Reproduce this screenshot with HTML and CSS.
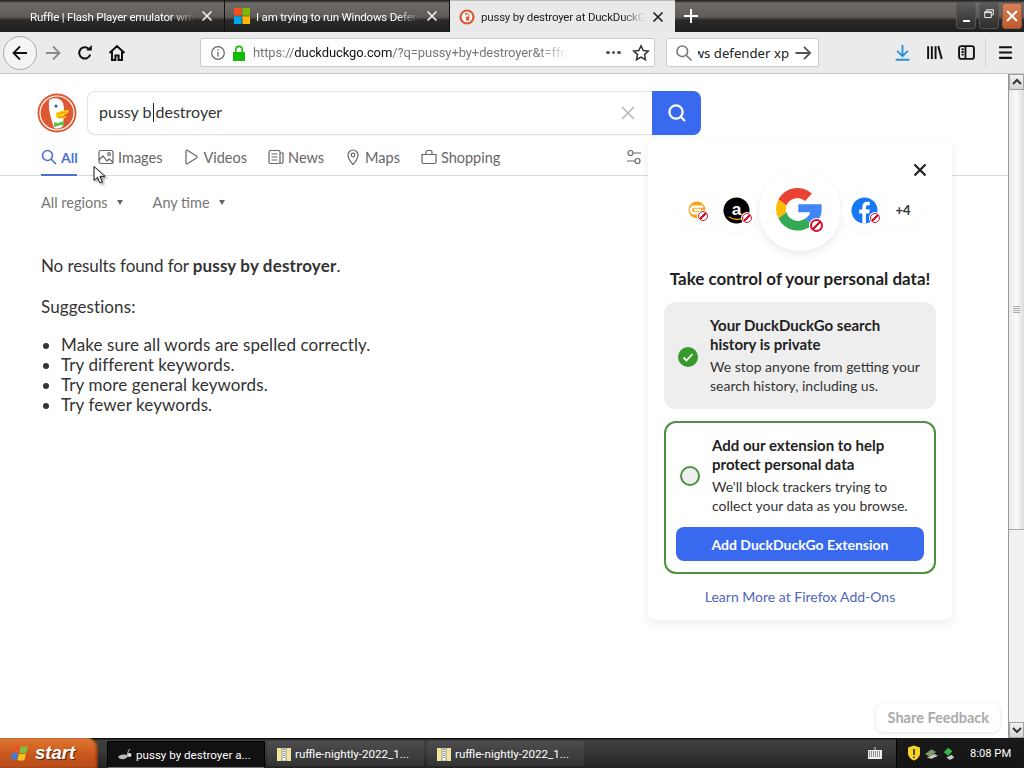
FILE: index.html
```html
<!DOCTYPE html>
<html lang="en">
<head>
<meta charset="utf-8">
<title>pussy by destroyer at DuckDuckGo</title>
<link rel="stylesheet" href="styles.css">
</head>
<body>
<div class="window">
  <header class="tabbar">
    <div class="tab dark first"><span class="tab-title">Ruffle | Flash Player emulator writ</span><svg class="tab-x" viewBox="0 0 12 12"><path d="M1.5 1.5l9 9M10.5 1.5l-9 9"/></svg></div>
    <div class="tab dark second">
      <svg class="fav" viewBox="0 0 16 16"><rect width="7.6" height="7.6" fill="#f25022"/><rect x="8.4" width="7.6" height="7.6" fill="#7fba00"/><rect y="8.4" width="7.6" height="7.6" fill="#00a4ef"/><rect x="8.4" y="8.4" width="7.6" height="7.6" fill="#ffb900"/></svg>
      <span class="tab-title">I am trying to run Windows Defen</span><svg class="tab-x" viewBox="0 0 12 12"><path d="M1.5 1.5l9 9M10.5 1.5l-9 9"/></svg></div>
    <div class="tab tab-active">
      <svg class="fav" viewBox="0 0 16 16"><circle cx="8" cy="8" r="7.6" fill="#de5833"/><circle cx="8" cy="8" r="5.4" fill="#fff"/><path d="M6 4.2c2.6-1 4.6.5 4.4 3l-.2 4.6H7.4z" fill="#de5833"/><circle cx="8" cy="6.6" r="1.4" fill="#fff"/></svg>
      <span class="tab-title">pussy by destroyer at DuckDuckG</span><svg class="tab-x dark-x" viewBox="0 0 12 12"><path d="M1.5 1.5l9 9M10.5 1.5l-9 9"/></svg></div>
    <svg class="newtab" viewBox="0 0 14 14"><path d="M7 0v14M0 7h14"/></svg>
    <div class="caption">
      <div class="cap-btn"><span class="min-glyph"></span></div>
      <div class="cap-btn"><svg viewBox="0 0 11 11" class="cap-svg"><path d="M3 2.5V.8h7.2v5.6H8M.8 3h7.2v6.4H.8zM.8 4h7.2"/></svg></div>
      <div class="cap-btn close"><svg viewBox="0 0 12 12" class="cap-svg close-svg"><path d="M1 1l10 10M11 1L1 11"/></svg></div>
    </div>
  </header>

  <nav class="toolbar">
    <div class="back"><svg viewBox="0 0 18 18" class="ic"><path d="M16 9H2.5M9 2.5L2.5 9 9 15.5"/></svg></div>
    <svg viewBox="0 0 18 18" class="ic fwd"><path d="M2 9h13.5M9 2.5L15.5 9 9 15.5"/></svg>
    <svg viewBox="0 0 18 18" class="ic reload"><path d="M14.2 10.5A5.6 5.6 0 1 1 12.8 5"/><path class="solid" d="M10.2 6.6h5.6V1z"/></svg>
    <svg viewBox="0 0 18 18" class="ic home"><path d="M1.5 9L9 2l7.5 7M4 7.5V16h3.4v-4.5h3.2V16H14V7.5"/></svg>
    <div class="urlbar">
      <svg viewBox="0 0 16 16" class="info"><circle cx="8" cy="8" r="6.3"/><path d="M8 7v4.6M8 4.2v1.6"/></svg>
      <svg viewBox="0 0 14 16" class="lock"><path class="lock-body" d="M1 7h12v9H1z"/><path class="lock-loop" d="M3.8 7V4.6a3.2 3.2 0 0 1 6.4 0V7"/></svg>
      <span class="url"><span class="url-dim">https://</span>duckduckgo.com<span class="url-dim">/?q=pussy+by+destroyer&amp;t=ffn</span></span>
      <span class="dots"><i></i><i></i><i></i></span>
      <svg viewBox="0 0 18 18" class="star"><path d="M9 1.8l2.2 4.7 5.1.6-3.8 3.5 1 5.1L9 13.2l-4.5 2.5 1-5.1L1.7 7.100l5.100-.6z"/></svg>
    </div>
    <div class="searchbar">
      <svg viewBox="0 0 18 18" class="mag"><circle cx="7.300" cy="7.300" r="5.300"/><path d="M11.200 11.200L16.500 16.500"/></svg>
      <span class="search-text"><span class="search-inner">windows defender xp</span></span>
      <svg viewBox="0 0 18 18" class="ic go"><path d="M1.500 9H16M10 2.800L16.200 9 10 15.200"/></svg>
    </div>
    <div class="tools">
      <svg viewBox="0 0 16 16" class="tool dl"><path d="M8 1v10M3 6.500L8 11.500l5-5M1.500 14.800h13"/></svg>
      <svg viewBox="0 0 16 16" class="tool lib"><path d="M2 2v12M5.500 2v12M9 2v12M11.500 2l3.300 12"/></svg>
      <svg viewBox="0 0 16 16" class="tool side"><rect x="1" y="2" width="14" height="12" rx="2"/><path d="M7 2v12M3.300 5h2M3.300 7.500h2M3.300 10h2"/></svg>
      <span class="tool-sep"></span>
      <svg viewBox="0 0 16 16" class="tool burger"><path d="M2 3h12M2 8h12M2 13h12"/></svg>
    </div>
  </nav>

  <div class="viewport">
    <main class="page">
      <div class="search-row">
        <svg viewBox="0 0 40 40" class="logo">
          <circle cx="20" cy="20" r="19.500" fill="#de5833"/>
          <circle cx="20" cy="20" r="17" fill="none" stroke="#fff" stroke-width="1.200"/>
          <path d="M12 7c5-3 12-2 14 3 1 3 1 7 1 9l-1 14c-3 3-7 3-9 2-2-8-6-16-5-28z" fill="#fff"/>
          <circle cx="19" cy="13" r="1.500" fill="#2d4f8e"/>
          <path d="M19 20c3-2 9-3 12-3 1 1 1 2 0 3l-4 2 3 2c-3 2-8 2-11 0z" fill="#fdd20a"/>
          <path d="M21 21c3-1 6-2 9-2M21 24c3 .5 6 0 8-1" stroke="#f58a1f" stroke-width="1.200" fill="none"/>
          <path d="M17 29l4 1 3-1 3-1v5l-3-1-3 1-4 1z" fill="#67bd45"/>
        </svg>
        <div class="searchbox">
          <div class="query">pussy b<span class="caret"></span>destroyer</div>
          <svg viewBox="0 0 14 14" class="clear"><path d="M1 1l12 12M13 1L1 13"/></svg>
          <div class="search-btn"><svg viewBox="0 0 20 20" class="search-ic"><circle cx="9" cy="9" r="6.600"/><path d="M13.800 13.800L18 18"/></svg></div>
        </div>
      </div>

      <div class="nav-tabs">
        <div class="nt nt-active"><svg viewBox="0 0 16 16" class="nt-ic"><circle cx="6.500" cy="6.500" r="5"/><path d="M10.200 10.200L15 15"/></svg>All</div>
        <div class="nt"><svg viewBox="0 0 16 16" class="nt-ic"><rect x="1" y="1.500" width="14" height="13" rx="2"/><circle cx="11" cy="5" r="1.300"/><path d="M1 11l4-4 4 5 2-2 4 3"/></svg>Images</div>
        <div class="nt"><svg viewBox="0 0 16 16" class="nt-ic"><path d="M3 2c0-.8.600-1 1.300-.7L13.500 7c.8.500.8 1.500 0 2l-9.200 5.700C3.600 15 3 14.800 3 14z"/></svg>Videos</div>
        <div class="nt"><svg viewBox="0 0 16 16" class="nt-ic"><rect x="1" y="1.500" width="11" height="13" rx="1.500"/><path d="M12 4h3v9a1.500 1.500 0 0 1-3 0M3.500 5h6M3.500 8h6M3.500 11h6"/></svg>News</div>
        <div class="nt"><svg viewBox="0 0 16 16" class="nt-ic"><path d="M8 15.500S3 10 3 6a5 5 0 0 1 10 0c0 4-5 9.500-5 9.500z"/><circle cx="8" cy="6" r="1.800"/></svg>Maps</div>
        <div class="nt"><svg viewBox="0 0 16 16" class="nt-ic"><path d="M1 5.500h14v7.500a1.500 1.500 0 0 1-1.500 1.500h-11A1.500 1.500 0 0 1 1 13zM5 5.500V3a1.500 1.500 0 0 1 1.500-1.500h3A1.500 1.500 0 0 1 11 3v2.500"/></svg>Shopping</div>
        <div class="nt settings"><svg viewBox="0 0 16 16" class="nt-ic"><circle cx="4.500" cy="4" r="2.500"/><circle cx="11.500" cy="12" r="2.500"/><path d="M7 4h8M1 12h8"/></svg>Settings</div>
      </div>

      <div class="filters">
        <span class="filter">All regions<i class="tri"></i></span>
        <span class="filter">Any time<i class="tri"></i></span>
      </div>

      <div class="results">
        <p class="no-res">No results found for <b>pussy by destroyer</b>.</p>
        <p class="sugg">Suggestions:</p>
        <ul class="sugg-list">
          <li>Make sure all words are spelled correctly.</li>
          <li>Try different keywords.</li>
          <li>Try more general keywords.</li>
          <li>Try fewer keywords.</li>
        </ul>
      </div>

      <aside class="promo">
        <svg viewBox="0 0 14 14" class="promo-x"><path d="M1.500 1.500l11 11M12.500 1.500l-11 11"/></svg>
        <div class="brands">
          <div class="brand b-s"><svg viewBox="0 0 34 34" class="brand-svg s20"><circle cx="17" cy="17" r="11" fill="#f5a51b"/><path d="M25 12.500H13.500a4.500 4.500 0 0 0 0 9H22M13 17h9" stroke="#fff" stroke-width="3" fill="none"/></svg><span class="block bs"></span></div>
          <div class="brand b-m"><svg viewBox="0 0 28 28" class="brand-svg s27"><circle cx="14" cy="14" r="13.500" fill="#000"/><text x="14" y="19" class="amz">a</text><path d="M6 20.500c5 3.500 11 3.500 16 .5" stroke="#f90" stroke-width="1.500" fill="none"/></svg><span class="block bs"></span></div>
          <div class="brand b-l"><svg viewBox="2 1 44 44" class="brand-svg s44">
            <path d="M34.500 8.500A19 19 0 0 0 5 13.500l7 5.500a10.500 10.500 0 0 1 16.500-4z" fill="#ea4335"/>
            <path d="M5 13.500a19 19 0 0 0 0 17l7-5.500a10.500 10.500 0 0 1 0-6z" fill="#fbbc05"/>
            <path d="M5 30.500A19 19 0 0 0 35 36l-6.500-5.500A10.500 10.500 0 0 1 12 25z" fill="#34a853"/>
            <path d="M22.500 18H43v5c0 6-3 10-8 13l-6.500-5.500c2.500-1.500 4-3.200 4.500-5.500H22.500z" fill="#4285f4"/></svg><span class="block bl"></span></div>
          <div class="brand b-m"><svg viewBox="0 0 28 28" class="brand-svg s27"><circle cx="14" cy="14" r="13.500" fill="#1877f2"/><path d="M15.500 27.500V17h3.300l.6-4h-3.900v-2.400c0-1.200.5-2 2.100-2h1.900V5.200C18.900 5 17.800 5 16.800 5c-3 0-5 1.800-5 5.100V13H8.500v4h3.300v10.500z" fill="#fff"/></svg><span class="block bs"></span></div>
          <div class="brand b-s more">+4</div>
        </div>
        <h2 class="promo-title">Take control of your personal data!</h2>
        <section class="card done">
          <span class="check"><svg viewBox="0 0 20 20" class="check-svg"><path d="M5.500 10.500l3 3 6-6.500"/></svg></span>
          <div class="card-copy">
            <h3>Your DuckDuckGo search history is private</h3>
            <p>We stop anyone from getting your search history, including us.</p>
          </div>
        </section>
        <section class="card todo">
          <div class="todo-row">
            <span class="radio"></span>
            <div class="card-copy">
              <h3>Add our extension to help protect personal data</h3>
              <p>We'll block trackers trying to collect your data as you browse.</p>
            </div>
          </div>
          <div class="add-btn">Add DuckDuckGo Extension</div>
        </section>
        <div class="learn">Learn More at Firefox Add-Ons</div>
      </aside>

      <div class="feedback">Share Feedback</div>
      <svg viewBox="0 0 12 19" class="cursor"><path d="M1 1v14l3.500-3.300 2.300 5.600 2.500-1-2.400-5.500H12z"/></svg>
    </main>
    <div class="scrollbar">
      <div class="sb-btn"><svg viewBox="0 0 10 8" class="sb-arrow"><path d="M1 6l4-4 4 4"/></svg></div>
      <div class="sb-track"><div class="sb-thumb"><span class="grip"></span></div></div>
      <div class="sb-btn"><svg viewBox="0 0 10 8" class="sb-arrow"><path d="M1 2l4 4 4-4"/></svg></div>
    </div>
  </div>

  <footer class="taskbar">
    <div class="start">
      <svg viewBox="0 0 20 20" class="flag"><path d="M3 3c2-1 4-1 6 0L7.500 9.500c-2-1-4-1-6 0z" fill="#e8542a"/><path d="M10 3c2 1 4 1 7 0l-1.500 6.500c-2 1-5 1-7 0z" fill="#7cc242"/><path d="M1 10.500c2-1 4-1 6 0L5.500 17c-2-1-4-1-6 0z" fill="#3f7fe0"/><path d="M8 10.500c2 1 5 1 7 0L13.500 17c-2 1-5 1-7 0z" fill="#f5c31c"/></svg>
      <span class="start-text">start</span>
    </div>
    <div class="task pressed"><svg viewBox="0 0 16 16" class="task-ic"><path d="M1 10c3-3 7-3 10-1-1 3-7 5-10 1z" fill="#bbb"/><path d="M10 9c1-3 1-6 3-7" stroke="#ccc" fill="none"/><circle cx="12.500" cy="8" r="2" fill="#ddd"/></svg><span>pussy by destroyer a...</span></div>
    <div class="task"><svg viewBox="0 0 16 16" class="task-ic"><path d="M1 2h14v13H1z" fill="#f0e6a0"/><path d="M6 2h4v13H6z" fill="#fff" stroke="#555" stroke-width=".6"/><path d="M8 3v9" stroke="#333" stroke-dasharray="1 1"/></svg><span>ruffle-nightly-2022_1...</span></div>
    <div class="task"><svg viewBox="0 0 16 16" class="task-ic"><path d="M1 2h14v13H1z" fill="#f0e6a0"/><path d="M6 2h4v13H6z" fill="#fff" stroke="#555" stroke-width=".6"/><path d="M8 3v9" stroke="#333" stroke-dasharray="1 1"/></svg><span>ruffle-nightly-2022_1...</span></div>
    <div class="lang"><svg viewBox="0 0 14 12" class="kbd"><rect y="3" width="14" height="9" fill="#eee"/><path d="M1 5h12M1 7h12M1 9h12" stroke="#333" stroke-dasharray="1 1"/><path d="M7 3V0" stroke="#ddd"/></svg></div>
    <div class="tray">
      <svg viewBox="0 0 14 16" class="tray-ic"><path d="M7 .5l6 2v6c0 3-3 6-6 7-3-1-6-4-6-7v-6z" fill="#f5d327"/><path d="M7 4v6M7 11.500v1.500" stroke="#222" stroke-width="1.500"/></svg>
      <svg viewBox="0 0 16 14" class="tray-ic wide"><path d="M1 8l7-5 5 3-7 5z" fill="#7a9a6a"/><path d="M3 12l8-4 4 2-7 3z" fill="#c8c8c8"/></svg>
      <svg viewBox="0 0 16 16" class="tray-ic"><path d="M2 7l5-5 5 4-5 5z" fill="#38b54a"/><path d="M5 13l6-3 3 3-5 3z" fill="#c8c8c8"/></svg>
      <span class="clock">8:08 PM</span>
    </div>
  </footer>
</div>
</body>
</html>
```
FILE: styles.css
```css
* { box-sizing: border-box; }
html, body { margin: 0; height: 100%; overflow: hidden; }
body { font-family: "Lato", "Liberation Sans", sans-serif; background: #fff; }
.window { width: 1024px; height: 768px; display: flex; flex-direction: column; }

/* tab strip */
.tabbar { height: 32px; flex: none; display: flex; align-items: stretch; color: #fff;
  background: linear-gradient(#2a2a2a 0, #2a2a2a 1px, #6f6c6a 3px, #5d5a58 17px, #2b2a29 20px, #1f1f1f 32px); }
.tab { display: flex; align-items: center; font: 11.500px Roboto, "Liberation Sans", sans-serif; letter-spacing: -.2px; }
.tab-title { flex: 1; min-width: 0; white-space: nowrap; overflow: hidden; padding-top: 1px;
  -webkit-mask-image: linear-gradient(to right, #000 86%, transparent 100%); mask-image: linear-gradient(to right, #000 86%, transparent 100%); }
.tab-x { width: 12px; height: 12px; flex: none; fill: none; stroke: #eee; stroke-width: 1.700; }
.tab-x.dark-x { stroke: #222; }
.fav { width: 16px; height: 16px; flex: none; margin-right: 6px; }
.dark { border-right: 1px solid #111; }
.first { width: 225px; padding: 0 11px 0 30px; }
.first .tab-title { margin-right: 7px; }
.second { width: 225px; padding: 0 11px 0 9px; }
.second .tab-title { margin-right: 7px; }
.tab-active { width: 225px; background: #e9e9e9; color: #222; padding: 0 11px 0 9px; border-top: 1px solid #bbb; }
.tab-active .tab-title { margin-right: 7px; }
.newtab { width: 14px; height: 14px; margin: 9px 0 0 9px; fill: none; stroke: #fff; stroke-width: 2; flex: none; }
.caption { margin-left: auto; margin-right: 2px; display: flex; gap: 3px; padding-top: 3px; }
.cap-btn { width: 20px; height: 26px; border-radius: 3px; border: 1px solid #555; background: linear-gradient(#5b5956, #2e2d2c);
  display: flex; align-items: center; justify-content: center; position: relative; }
.cap-btn.close { background: linear-gradient(#d9805a, #bf5a2c); border-color: #8d5a44; }
.min-glyph { width: 7px; height: 2px; background: #fff; margin-top: 9px; }
.cap-svg { width: 10px; height: 10px; fill: none; stroke: #fff; stroke-width: 1; margin-top: -4px; }
.close-svg { width: 12px; height: 12px; stroke-width: 2; margin-top: 0; }

/* toolbar */
.toolbar { height: 42px; flex: none; display: flex; align-items: center; background: #ebebeb; border-bottom: 1px solid #c8c8c8; padding-left: 3px; }
.ic { width: 18px; height: 18px; fill: none; stroke: #111; stroke-width: 1.800; flex: none; }
.back { width: 34px; height: 34px; border-radius: 50%; background: #f4f4f4; border: 1px solid #adadad; display: flex; align-items: center; justify-content: center; flex: none; }
.fwd { stroke: #8a8a8a; margin-left: 7px; }
.reload { margin-left: 14px; stroke-width: 2; }
.solid { fill: #111; stroke: none; }
.home { margin-left: 14px; stroke-width: 2; }
.urlbar { width: 455px; height: 29px; margin-left: 74px; background: #fff; border: 1px solid #ccc; border-radius: 2px; display: flex; align-items: center; padding: 0 4px 0 9px; flex: none; }
.info { width: 16px; height: 16px; fill: none; stroke: #666; stroke-width: 1.200; flex: none; }
.lock { width: 14px; height: 16px; margin-left: 6px; flex: none; }
.lock-body { fill: #12bc00; }
.lock-loop { fill: none; stroke: #12bc00; stroke-width: 1.600; }
.url { margin-left: 7px; font: 13px Roboto, "Liberation Sans", sans-serif; letter-spacing: -.1px; color: #111; white-space: nowrap; width: 316px; overflow: hidden;
  -webkit-mask-image: linear-gradient(to right, #000 90%, transparent 100%); mask-image: linear-gradient(to right, #000 90%, transparent 100%); }
.url-dim { color: #777; }
.dots { display: flex; gap: 2px; margin-left: 37px; flex: none; }
.dots i { width: 3.500px; height: 3.500px; border-radius: 50%; background: #555; }
.star { width: 18px; height: 18px; fill: none; stroke: #333; stroke-width: 1.500; margin-left: 11px; flex: none; }
.searchbar { width: 153px; height: 29px; margin-left: 11px; background: #fff; border: 1px solid #ccc; border-radius: 2px; display: flex; align-items: center; padding: 0 6px 0 8px; flex: none; }
.mag { width: 18px; height: 18px; fill: none; stroke: #777; stroke-width: 1.600; flex: none; }
.search-text { flex: 1; min-width: 0; margin: 0 5px 0 5px; overflow: hidden; direction: rtl; font: 13.200px "Noto Sans", "Liberation Sans", sans-serif; color: #222; white-space: nowrap; }
.search-inner { direction: ltr; unicode-bidi: isolate; }
.go { stroke: #555; }
.tools { flex: 1; display: flex; align-items: center; height: 100%; }
.tool { width: 17px; height: 17px; fill: none; stroke: #111; stroke-width: 1.800; flex: none; }
.dl { margin-left: 75px; stroke: #2a90d9; }
.lib { margin-left: 15px; }
.side { margin-left: 15px; }
.tool-sep { width: 1px; height: 29px; background: #d4d4d4; margin-left: 10px; }
.burger { margin-left: 11px; stroke-width: 2; }

/* viewport */
.viewport { flex: 1; min-height: 0; display: flex; }
.page { flex: 1; min-width: 0; position: relative; background: #fff; overflow: hidden; }
.search-row { display: flex; align-items: center; gap: 10px; padding: 17px 0 0 37px; }
.logo { width: 40px; height: 40px; flex: none; }
.searchbox { width: 614px; height: 44px; display: flex; align-items: center; border: 1px solid #e2e2e2; border-right: 0; border-radius: 8px; box-shadow: 0 1px 2px rgba(0,0,0,.04); background: #fff; }
.query { flex: 1; padding: 0 0 2px 11px; font-size: 16px; color: #333; }
.caret { display: inline-block; width: 1px; height: 19px; background: #222; vertical-align: -4px; margin: 0 2px 0 1px; }
.clear { width: 14px; height: 14px; fill: none; stroke: #b5b5b5; stroke-width: 1.500; margin-right: 17px; flex: none; }
.search-btn { width: 49px; height: 44px; background: #3969ef; border-radius: 0 8px 8px 0; display: flex; align-items: center; justify-content: center; flex: none; }
.search-ic { width: 20px; height: 20px; fill: none; stroke: #fff; stroke-width: 2.200; }

.nav-tabs { display: flex; margin-top: 8px; height: 33px; padding-left: 41px; border-bottom: 1px solid #dcdcdc; font-size: 14.500px; color: #666; gap: 21px; }
.nt { display: flex; align-items: flex-start; gap: 4px; padding-top: 6px; height: 33px; line-height: 18px; }
.nt-ic { width: 16px; height: 16px; fill: none; stroke: #666; stroke-width: 1.200; flex: none; }
.nt-active { color: #4a70d6; font-weight: 700; font-size: 14px; border-bottom: 2px solid #4a70d6; width: 36px; flex: none; }
.nt-active .nt-ic { stroke: #4a70d6; stroke-width: 1.600; }
.settings { margin-left: 105px; gap: 6px; }

.filters { display: flex; gap: 30px; padding: 18px 0 0 41px; font-size: 14.500px; color: #777; }
.filter { display: flex; align-items: center; gap: 9px; line-height: 17px; }
.tri { width: 0; height: 0; border: 3.500px solid transparent; border-top: 5px solid #666; border-bottom: 0; }

.results { padding: 45px 0 0 41px; font-size: 17px; color: #333; letter-spacing: .1px; }
.results p { margin: 0; line-height: 20px; }
.results .no-res { letter-spacing: -.1px; }
.no-res b { letter-spacing: .15px; }
.results .sugg { margin-top: 21px; }
.sugg-list { margin: 18px 0 0; padding: 0 0 0 20px; line-height: 20px; }

/* promo */
.promo { position: absolute; left: 648px; top: 66px; width: 304px; height: 480px; background: #fff; border-radius: 8px; box-shadow: 0 4px 12px rgba(0,0,0,.08); padding: 0 16px; }
.promo-x { position: absolute; right: 25px; top: 23px; width: 14px; height: 14px; fill: none; stroke: #222; stroke-width: 2.200; }
.brands { display: flex; align-items: center; justify-content: center; height: 70px; margin-top: 35px; }
.brand { border-radius: 50%; background: #fff; display: flex; align-items: center; justify-content: center; position: relative; flex: none; box-shadow: 0 1px 5px rgba(0,0,0,.035); }
.b-s { width: 36px; height: 36px; margin: 0 -2px; }
.b-m { width: 44px; height: 44px; margin: 0 1px; }
.b-l { width: 82px; height: 82px; box-shadow: 0 4px 10px rgba(0,0,0,.08); }
.more { font-size: 13px; color: #333; font-weight: 700; }
.s20 { width: 26px; height: 26px; }
.s27 { width: 27px; height: 27px; }
.s44 { width: 50px; height: 50px; }
.amz { font: 700 18px "Liberation Sans", sans-serif; fill: #fff; text-anchor: middle; }
.block { position: absolute; border-radius: 50%; background: #fff; }
.block::after { content: ""; position: absolute; inset: 1px; border-radius: 50%; border: 2px solid #d8102d; background: linear-gradient(135deg, transparent 42%, #d8102d 42%, #d8102d 58%, transparent 58%); }
.bs { width: 12px; height: 12px; right: 6px; bottom: 6px; }
.b-m .bs { right: 5px; bottom: 8px; }
.bs::after { border-width: 1.500px; }
.bl { width: 15px; height: 15px; right: 17px; bottom: 18px; }
.promo-title { margin: 23px 0 13px; font-size: 17px; line-height: 21px; font-weight: 700; color: #222; text-align: center; white-space: nowrap; }
.card { border-radius: 12px; }
.done { height: 107px; background: #eee; display: flex; align-items: center; padding: 0 14px; gap: 12px; }
.check { width: 20px; height: 20px; border-radius: 50%; background: #37982c; flex: none; margin-top: 2px; }
.check-svg { display: block; width: 20px; height: 20px; fill: none; stroke: #fff; stroke-width: 1.800; }
.card-copy h3 { margin: 0; font-size: 15px; line-height: 19px; font-weight: 700; color: #222; }
.card-copy p { margin: 3px 0 0; font-size: 14px; line-height: 19px; color: #333; }
.todo { height: 153px; margin-top: 12px; border: 2px solid #4c9141; padding: 13px 10px 0; }
.todo-row { display: flex; align-items: center; gap: 12px; padding: 0 0 0 4px; }
.radio { width: 20px; height: 20px; border-radius: 50%; border: 2px solid #4c9141; background: #eee; flex: none; }
.add-btn { margin-top: 12px; height: 34px; border-radius: 8px; background: #3969ef; color: #fff; font-size: 14px; font-weight: 700; display: flex; align-items: center; justify-content: center; }
.learn { margin-top: 14px; text-align: center; font-size: 14px; line-height: 18px; color: #5166b8; }

.feedback { position: absolute; right: 8px; bottom: 6px; height: 29px; padding: 0 11px 0 12px; border-radius: 8px; background: #fff; box-shadow: 0 1px 4px rgba(0,0,0,.12); font-size: 14.500px; font-weight: 700; color: #aaa; line-height: 29px; }
.cursor { position: absolute; left: 93px; top: 91px; width: 12px; height: 20px; fill: #fff; stroke: #111; stroke-width: 1; filter: drop-shadow(2px 2px 1px rgba(0,0,0,.35)); }

/* scrollbar */
.scrollbar { width: 16px; flex: none; background: #f1f1f1; border-left: 1px solid #999; display: flex; flex-direction: column; }
.sb-btn { height: 16px; flex: none; background: linear-gradient(#f2f2f2, #d4d4d4); border: 1px solid #a0a0a0; display: flex; align-items: center; justify-content: center; }
.sb-arrow { width: 10px; height: 8px; fill: none; stroke: #333; stroke-width: 2; }
.sb-track { flex: 1; display: flex; }
.sb-thumb { flex: none; width: 100%; height: 440px; background: linear-gradient(to right, #e9e9e9, #fafafa 50%, #dcdcdc); border-bottom: 1px solid #aaa; display: flex; align-items: center; justify-content: center; }
.grip { width: 7px; height: 7px; background: repeating-linear-gradient(#aaa 0 1px, #f5f5f5 1px 2px); }

/* taskbar */
.taskbar { height: 30px; flex: none; display: flex; align-items: stretch; color: #fff; font: 11.600px Roboto, "Liberation Sans", sans-serif;
  background: linear-gradient(#111 0, #111 1px, #3f3f3f 2px, #3a3a3a 12px, #232323 30px); }
.start { width: 98px; display: flex; align-items: center; gap: 4px; padding-left: 11px; border-radius: 0 10px 0 0;
  background: linear-gradient(#e07c3c, #d96f2a 15%, #c8541a 60%, #b74f1d); flex: none; box-shadow: inset -2px 0 2px rgba(80,30,0,.5); }
.flag { width: 20px; height: 20px; flex: none; }
.start-text { font: italic 700 18.500px "Liberation Sans", sans-serif; text-shadow: 1px 1px 1px rgba(0,0,0,.6); }
.task { width: 157px; height: 25px; margin: 3px 3px 0 0; display: flex; align-items: center; gap: 3px; padding: 0 9px; border-radius: 2px; background: linear-gradient(#4d4d4d, #333); white-space: nowrap; overflow: hidden; flex: none; }
.task.pressed { width: 158px; height: 27px; margin-left: 9px; margin-right: 2px; background: #111; border: 1px solid #000; border-bottom-color: #777; }
.task-ic { width: 16px; height: 16px; flex: none; }
.lang { margin-left: auto; flex: none; display: flex; align-items: center; justify-content: flex-end; margin-right: 14px; }
.kbd { width: 14px; height: 12px; }
.tray { width: 128px; flex: none; border-left: 1px solid #000; background: linear-gradient(#1a1a1a, #141414); display: flex; align-items: center; padding-left: 10px; gap: 3px; }
.tray-ic { width: 14px; height: 16px; flex: none; }
.tray-ic.wide { width: 15px; }
.clock { margin-left: 11px; font-size: 11.200px; }
```
